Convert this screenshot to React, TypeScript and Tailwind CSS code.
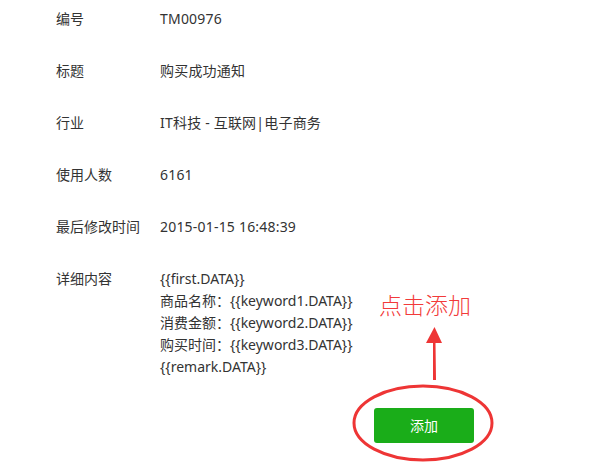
import React from 'react';

const rows: [string, string][] = [
  ['编号', 'TM00976'],
  ['标题', '购买成功通知'],
  ['行业', 'IT科技 - 互联网|电子商务'],
  ['使用人数', '6161'],
  ['最后修改时间', '2015-01-15 16:48:39'],
];

const details = [
  '{{first.DATA}}',
  '商品名称：{{keyword1.DATA}}',
  '消费金额：{{keyword2.DATA}}',
  '购买时间：{{keyword3.DATA}}',
  '{{remark.DATA}}',
];

export default function App() {
  return (
    <div
      className="relative h-[462px] w-[608px] overflow-hidden bg-white text-[14px] leading-[22px] text-[#333]"
      style={{ fontFamily: '"Noto Sans", "Noto Sans CJK SC", sans-serif' }}
    >
      <div className="flex flex-col gap-[30px] pl-[56px] pt-[8px]">
        {rows.map(([k, v]) => (
          <div key={k} className="flex">
            <div className="w-[104px] shrink-0">{k}</div>
            <div className="tracking-[0.2px]">{v}</div>
          </div>
        ))}
        <div className="flex">
          <div className="w-[104px] shrink-0">详细内容</div>
          <div className="flex flex-col">
            {details.map((d) => (
              <div key={d}>{d}</div>
            ))}
          </div>
        </div>
      </div>

      <div className="pl-[374px] pt-[30px]">
        <button className="h-[35px] w-[100px] rounded-[3px] bg-[#1aad19] text-[14px] text-white">
          添加
        </button>
      </div>

      {/* annotation overlay */}
      <div
        className="absolute left-[379px] top-[289px] text-[23px] leading-[30px] text-[#f23a3a]"
        style={{ fontFamily: '"Noto Sans CJK SC", sans-serif', fontWeight: 300 }}
      >
        点击添加
      </div>
      <svg className="absolute left-0 top-0" width="608" height="462">
        <ellipse cx="423" cy="423" rx="69" ry="37" fill="none" stroke="#ee3535" strokeWidth="3" />
        <path d="M433 380 L436 380 L435.5 343 L442 343 L434.5 327 L426 343 L433 343 Z" fill="#ee3535" />
      </svg>
    </div>
  );
}
